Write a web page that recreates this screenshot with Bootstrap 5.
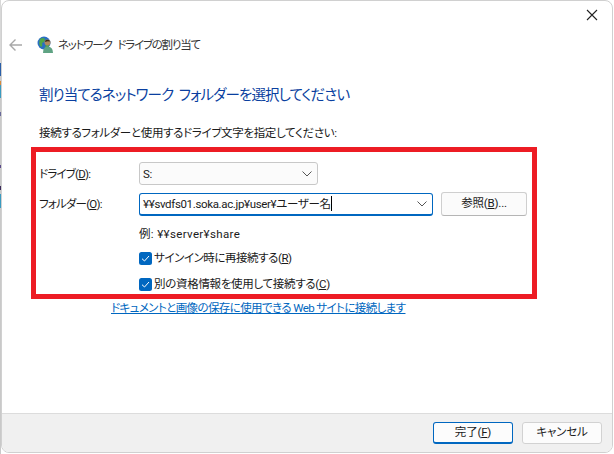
<!DOCTYPE html>
<html lang="ja"><head><meta charset="utf-8">
<link href="https://cdn.jsdelivr.net/npm/bootstrap@5.3.0/dist/css/bootstrap.min.css" rel="stylesheet">
<style>
html,body{margin:0;height:454px;width:614px;overflow:hidden}
body{font-family:Roboto,"Noto Sans CJK JP","Liberation Sans",sans-serif;font-size:11.5px;letter-spacing:-.45px;color:#1a1a1a;line-height:16px;font-feature-settings:"palt";
 background:linear-gradient(#d8d8d8 0 63px,#2a5fa8 63px 76px,#c9c9c9 76px 81px,#d98a3a 81px 85px,#3a9bc0 85px 98px,#c9c9c9 98px 112px,#6a6a9a 112px 116px,#c9c9c9 116px 165px,#5a4a8a 165px 168px,#c9c9c9 168px 186px,#3a2a5a 186px 190px,#c9c9c9 190px 194px,#3a9bc0 194px 208px,#c9c9c9 208px) 0 0/1px 100% no-repeat #fff}
.win{width:612px;height:453px;margin-left:1px;border:1px solid #d0d0d0;border-radius:8px;background:#fff;display:flex;flex-direction:column;overflow:hidden}
.titlebar{height:28px;justify-content:flex-end;padding-right:14px;flex:none}
.head{height:30px;padding-left:7px;flex:none;margin-top:1px}
.back{width:14px;margin-right:14px}
.globe{margin-right:4px}
.wtitle{color:#333;letter-spacing:-1.2px;word-spacing:4px}
.main{flex:1;padding:0 0 0 37px}
.bigtitle{font-size:14.5px;letter-spacing:-.9px;word-spacing:3px;color:#0a3fa0;line-height:22px;margin:25px 0 0;font-family:inherit}
.sub{margin-top:18px;line-height:16px;letter-spacing:-.33px}
.redbox{width:506px;height:152px;border:5px solid #ed1c24;margin:6px 0 0 -8px;padding:10px 0 0 3px}
.lbl{width:100px;flex:none;letter-spacing:-.8px}
.fakesel{height:23px;width:179px;border:1px solid #c8c8c8;border-radius:3px;background:#fbfbfb;padding:0 3px;justify-content:space-between}
.fakecombo{height:23px;width:294px;border:1px solid #0067c0;border-bottom-width:2px;border-radius:3px;padding:0 3px;justify-content:space-between;letter-spacing:-.35px}
.fakesel svg,.fakecombo svg{margin-right:2px}
.caret{width:1px;height:15px;background:#000;display:inline-block;vertical-align:-3px}
.browse{width:86px;height:24px;font-size:11.5px;letter-spacing:-.2px;line-height:1;padding:0;border:1px solid #cfcfcf;border-bottom-color:#b5b5b5;border-radius:3px;background:#fbfbfb;color:#1a1a1a;margin-left:8px;font-feature-settings:"palt"}
.row2{margin-top:7px}
.ex{margin:10px 0 0 100px;line-height:16px;letter-spacing:.35px}
.chk{margin:8px 0 0 100px;gap:2px;height:16px}
.chk2{margin-top:10px;letter-spacing:-.3px}
.tick{width:13px;height:13px}
.weblink{color:#0067c0;text-decoration:underline;margin:1px 0 0 72px;display:block;letter-spacing:-.6px;line-height:17px}
.foot{height:39px;background:#f0f0f0;border-top:1px solid #dcdcdc;justify-content:flex-end;gap:9px;padding-right:10px;flex:none}
.wbtn{width:80px;height:22px;padding:0;line-height:1;font-size:11.5px;letter-spacing:-.2px;background:#fcfcfc;color:#1a1a1a;border:1px solid #d2d2d2;border-radius:3px;font-feature-settings:"palt"}
.wbtn.pri{border:1px solid #0067c0;border-bottom-width:2px}
u{text-underline-offset:1px}
</style></head><body>
<div class="win">
 <div class="titlebar d-flex align-items-center"><svg width="12" height="12" viewBox="0 0 12 12"><path d="M1 1L11 11M11 1L1 11" stroke="#222" stroke-width="1.1" fill="none"/></svg></div>
 <div class="head d-flex align-items-center">
  <svg class="back" width="14" height="14" viewBox="0 0 14 14"><path d="M6.500 1.500L1 7L6.500 12.500M1 7H13" stroke="#a8a8a8" stroke-width="1.4" fill="none"/></svg>
  <svg class="globe" width="17" height="18" viewBox="0 0 17 18"><circle cx="7" cy="7" r="6.500" fill="#2a6fc4"/><path d="M3 3Q6 1 8 3Q8 6 5 7Q6 10 4 11Q1 8 3 3ZM9 8Q12 8 12 10Q10 13 8 12Z" fill="#4da64a"/><circle cx="10.500" cy="6.500" r="3" fill="#b08a5e"/><path d="M8 5Q10 2.500 13 5L12.500 5.500Q10 5 8.500 6Z" fill="#3a2a18"/><path d="M6 17Q6 10.500 10.500 10.500Q16 10.500 16 17Z" fill="#5fa383"/></svg>
  <span class="wtitle">ネットワーク ドライブの割り当て</span>
 </div>
 <div class="main">
  <h1 class="bigtitle fw-normal">割り当てるネットワーク フォルダーを選択してください</h1>
  <div class="sub">接続するフォルダーと使用するドライブ文字を指定してください:</div>
  <div class="redbox">
   <div class="d-flex align-items-center"><span class="lbl">ドライブ(<u>D</u>):</span>
    <div class="fakesel d-flex align-items-center"><span>S:</span><svg width="10" height="6" viewBox="0 0 10 6"><path d="M.5.5L5 5L9.500.5" stroke="#555" fill="none"/></svg></div></div>
   <div class="row2 d-flex align-items-center"><span class="lbl">フォルダー(<u>O</u>):</span>
    <div class="fakecombo d-flex align-items-center"><span>¥¥svdfs01.soka.ac.jp¥user¥ユーザー名<span class="caret"></span></span><svg width="10" height="6" viewBox="0 0 10 6"><path d="M.5.5L5 5L9.500.5" stroke="#555" fill="none"/></svg></div>
    <button class="browse btn" type="button">参照(<u>B</u>)...</button></div>
   <div class="ex">例: ¥¥server¥share</div>
   <div class="chk d-flex align-items-center"><svg class="tick" viewBox="0 0 13 13"><rect width="13" height="13" rx="2.500" fill="#0067c0"/><path d="M3 6.700L5.500 9L10 4" stroke="#fff" fill="none"/></svg><span>サインイン時に再接続する(<u>R</u>)</span></div>
   <div class="chk chk2 d-flex align-items-center"><svg class="tick" viewBox="0 0 13 13"><rect width="13" height="13" rx="2.500" fill="#0067c0"/><path d="M3 6.700L5.500 9L10 4" stroke="#fff" fill="none"/></svg><span>別の資格情報を使用して接続する(<u>C</u>)</span></div>
  </div>
  <a class="weblink" href="#">ドキュメントと画像の保存に使用できる Web サイトに接続します</a>
 </div>
 <div class="foot d-flex align-items-center">
  <button class="wbtn pri btn" type="button">完了(<u>F</u>)</button>
  <button class="wbtn btn" type="button">キャンセル</button>
 </div>
</div>
</body></html>
